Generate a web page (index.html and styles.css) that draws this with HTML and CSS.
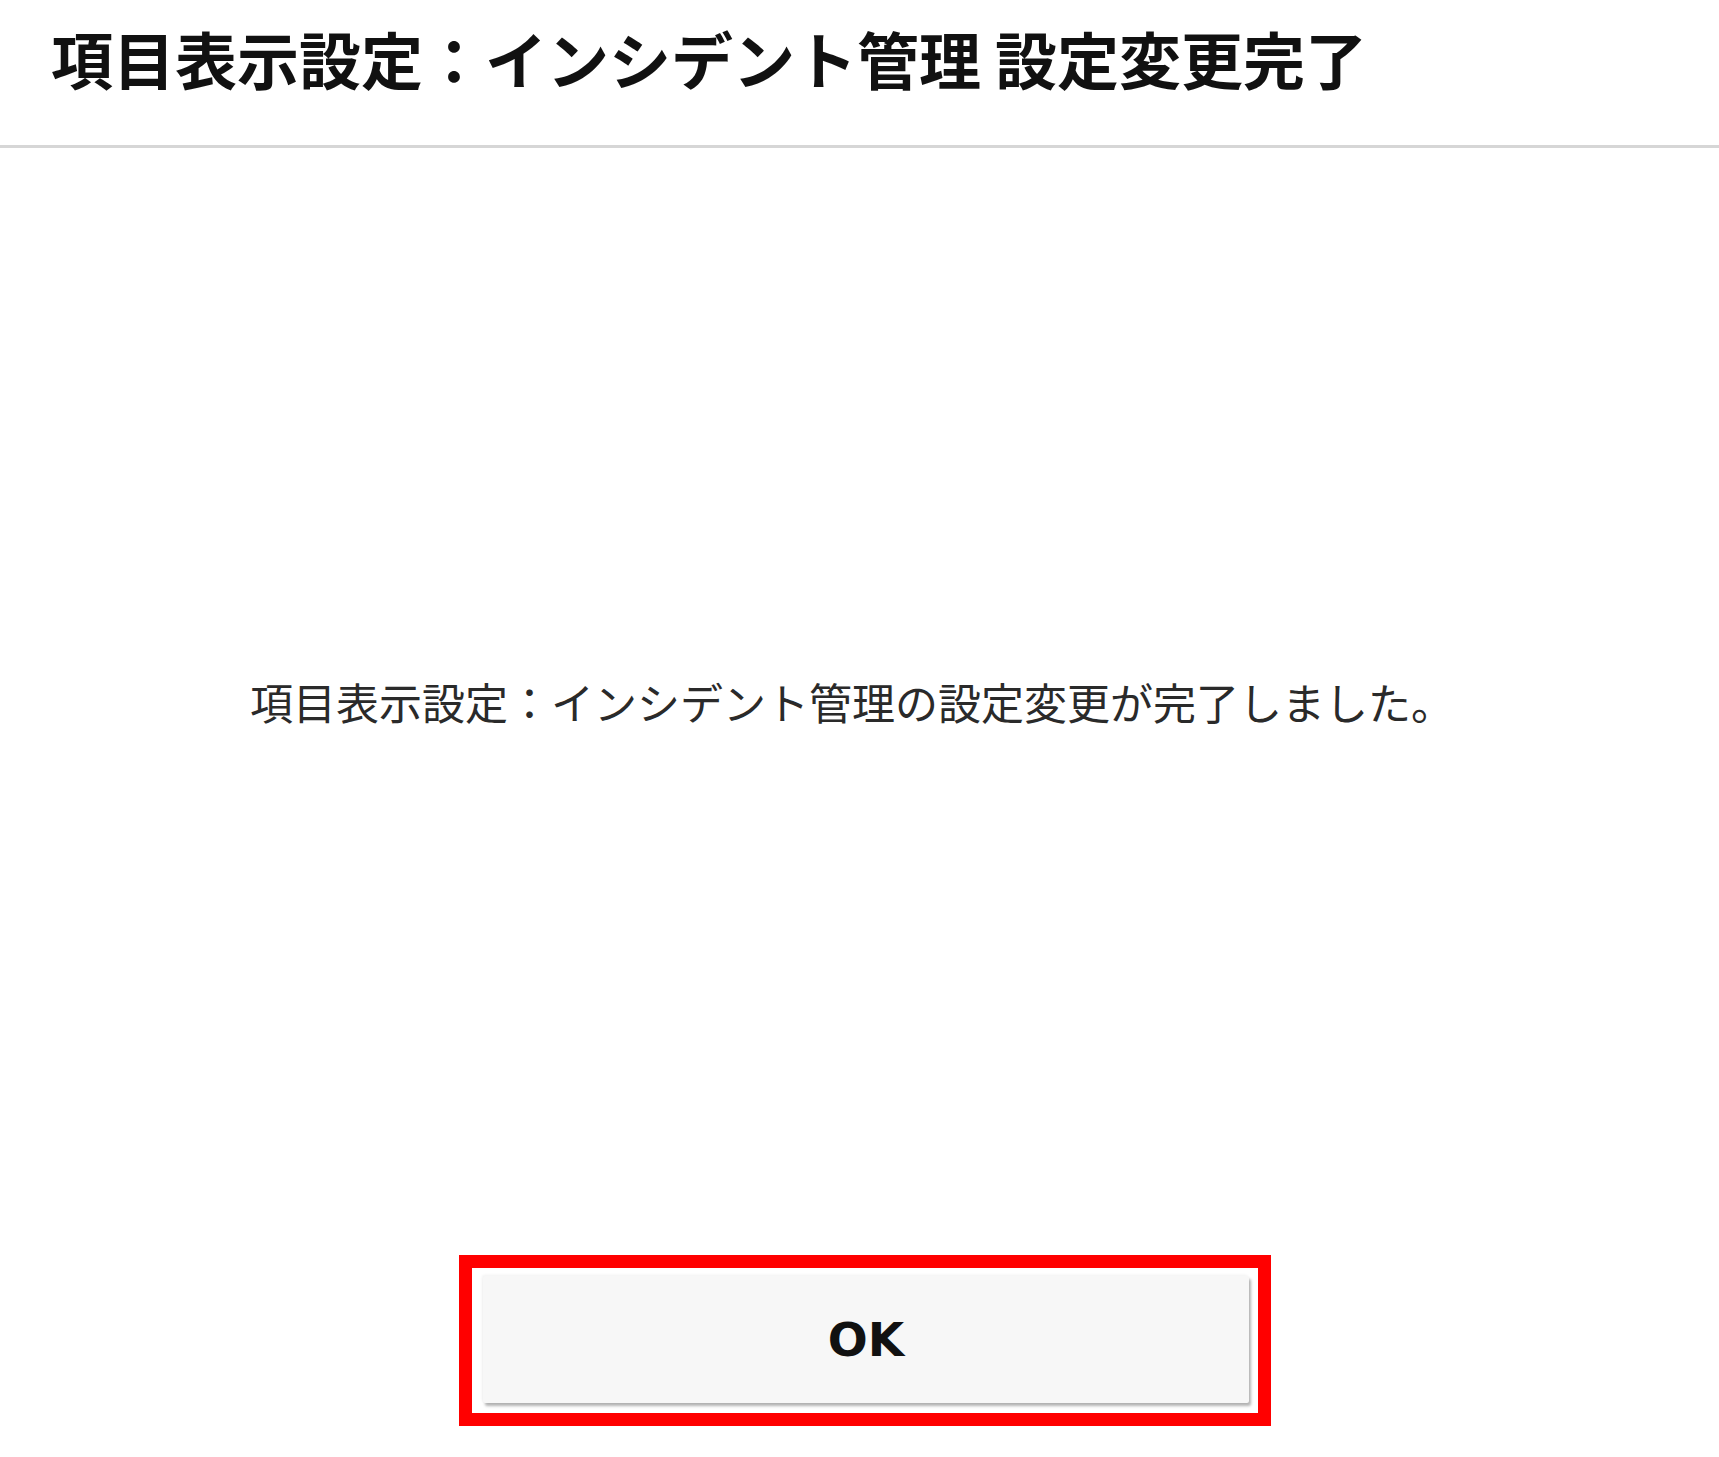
FILE: index.html
```html
<!DOCTYPE html>
<html lang="ja">
<head>
    <meta charset="UTF-8">
    <meta name="viewport" content="width=device-width, initial-scale=1.0">
    <title>項目表示設定：インシデント管理 設定変更完了</title>
    <link rel="stylesheet" href="styles.css">
</head>
<body>
    <div class="dialog">
        <div class="dialog-header">
            <h1>項目表示設定：インシデント管理 設定変更完了</h1>
        </div>

        <div class="dialog-body">
            <p class="message">項目表示設定：インシデント管理の設定変更が完了しました。</p>
        </div>

        <div class="dialog-footer">
            <div class="highlight">
                <button type="button">OK</button>
            </div>
        </div>
    </div>
</body>
</html>
```

FILE: styles.css
```css
html, body {
    height: 100%;
}

body {
    margin: 0;
    background-color: #fff;
    color: #111;
    font-family: "Noto Sans CJK JP", "Noto Sans", sans-serif;
}

.dialog {
    display: flex;
    flex-direction: column;
    height: 100%;
}

.dialog-header {
    padding: 27px 50px 56px 51px;
    border-bottom: 3px solid #d6d6d6;
}

h1 {
    margin: 0;
    font-size: 62px;
    line-height: 1;
    font-weight: 700;
    color: #111;
    white-space: nowrap;
}

.dialog-body {
    flex: 1;
    display: flex;
    align-items: center;
    justify-content: center;
    padding-right: 15px;
}

.message {
    margin: 0;
    font-size: 43px;
    line-height: 1;
    font-weight: 400;
    color: #2a2a2a;
    white-space: nowrap;
}

.dialog-footer {
    display: flex;
    justify-content: center;
    padding: 0 0 31px 11px;
}

.highlight {
    border: 13px solid #ff0000;
    padding: 8px 9px 10px 11px;
}

button {
    display: block;
    width: 766px;
    height: 127px;
    background-color: #f7f7f7;
    border: none;
    border-radius: 2px;
    box-shadow: 2px 3px 3px rgba(0, 0, 0, 0.3), -1px -1px 3px rgba(0, 0, 0, 0.06);
    font-family: "DejaVu Sans", sans-serif;
    font-size: 47px;
    font-weight: 700;
    color: #111;
    cursor: pointer;
}
```
